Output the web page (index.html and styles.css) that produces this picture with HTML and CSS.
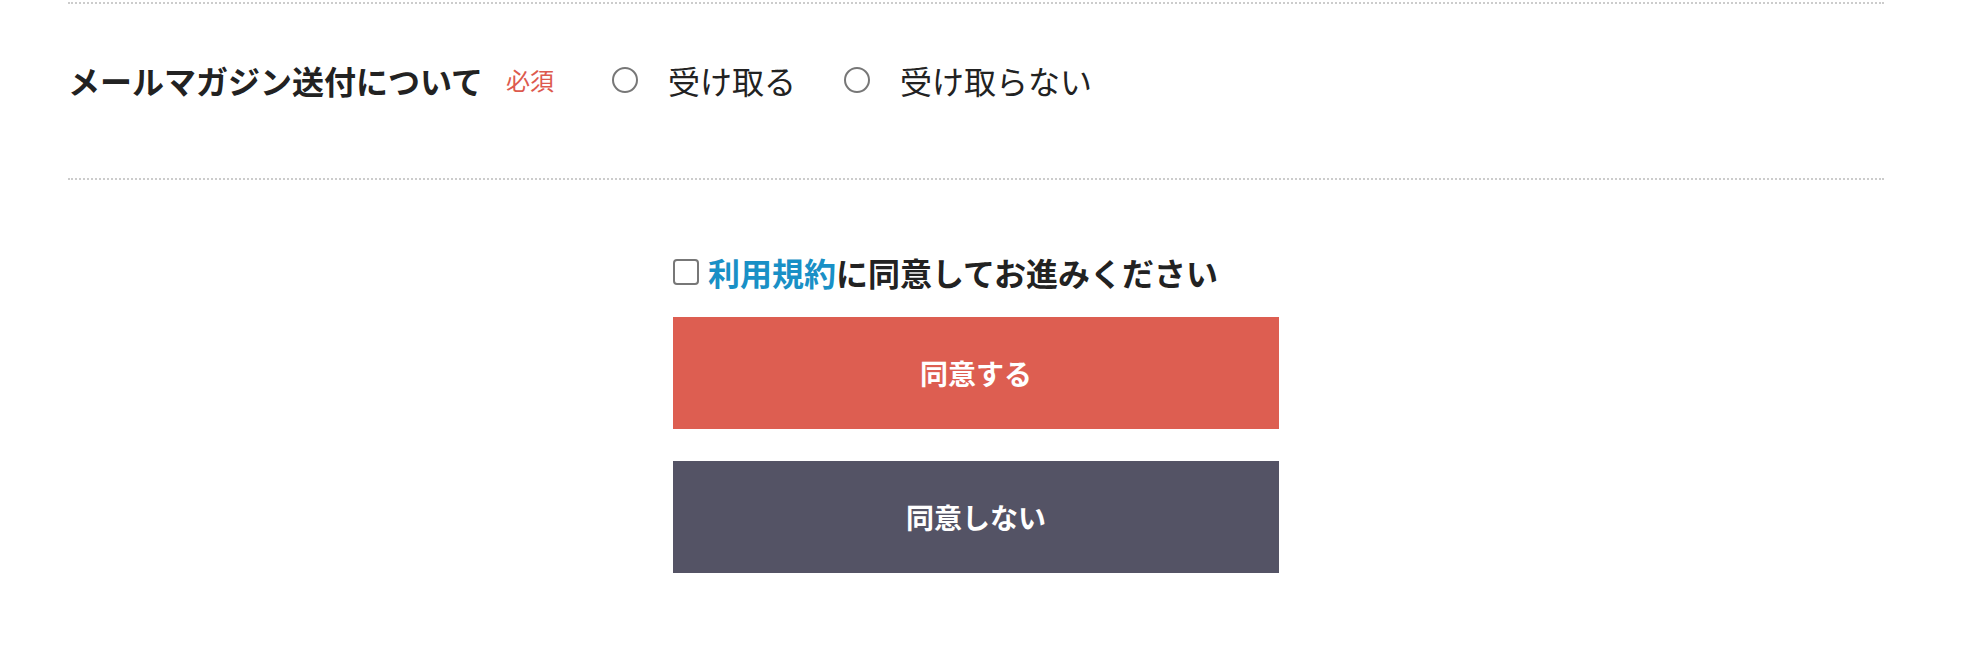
FILE: index.html
```html
<!DOCTYPE html>
<html lang="ja">
<head>
<meta charset="utf-8">
<title>メールマガジン送付について</title>
<link rel="stylesheet" href="styles.css">
</head>
<body>
<div class="page">
  <div class="form-row">
    <div class="row-label">
      <span class="label-text">メールマガジン送付について</span>
      <span class="required">必須</span>
    </div>
    <div class="radios">
      <label class="radio-item"><span class="radio"></span><span class="radio-text">受け取る</span></label>
      <label class="radio-item"><span class="radio"></span><span class="radio-text">受け取らない</span></label>
    </div>
  </div>
  <div class="agree">
    <div class="agree-inner">
      <label class="agree-check"><span class="checkbox"></span><span class="agree-text"><a class="terms" href="#">利用規約</a>に同意してお進みください</span></label>
      <button class="btn btn-agree" type="button">同意する</button>
      <button class="btn btn-disagree" type="button">同意しない</button>
    </div>
  </div>
</div>
</body>
</html>
```

FILE: styles.css
```css
html, body {
  margin: 0;
  padding: 0;
  background: #fff;
}
body {
  font-family: "Noto Sans CJK JP", "Noto Sans", sans-serif;
  color: #222;
}
.page {
  padding: 2px 102px 0 68px;
}
.form-row {
  border-top: 2px dotted #ccc;
  border-bottom: 2px dotted #ccc;
  height: 174px;
  box-sizing: content-box;
  display: flex;
  align-items: flex-start;
}
.row-label {
  display: flex;
  align-items: center;
  margin-top: 52px;
  height: 48px;
}
.label-text {
  font-size: 32px;
  font-weight: 700;
  line-height: 48px;
}
.required {
  font-size: 24px;
  color: #dd5a4e;
  margin-left: 23px;
  line-height: 48px;
}
.radios {
  display: flex;
  align-items: center;
  margin-top: 52px;
  height: 48px;
  margin-left: 58px;
  gap: 48px;
}
.radio-item {
  display: flex;
  align-items: center;
  gap: 30px;
}
.radio {
  width: 22px;
  height: 22px;
  border: 2px solid #777;
  border-radius: 50%;
  background: #fff;
}
.radio-text {
  font-size: 32px;
  line-height: 48px;
}
.agree {
  display: flex;
  justify-content: center;
  padding-top: 68px;
}
.agree-inner {
  width: 606px;
  display: flex;
  flex-direction: column;
}
.agree-check {
  display: flex;
  align-items: center;
  gap: 9px;
  height: 48px;
  font-size: 32px;
  font-weight: 700;
  line-height: 48px;
}
.checkbox {
  width: 22px;
  height: 22px;
  border: 2px solid #777;
  border-radius: 4px;
  background: #fff;
}
.terms {
  color: #1990c6;
  text-decoration: none;
}
.btn {
  border: 0;
  width: 606px;
  height: 112px;
  font-family: "Noto Sans CJK JP", "Noto Sans", sans-serif;
  font-size: 28px;
  font-weight: 700;
  color: #fff;
  display: flex;
  align-items: center;
  justify-content: center;
  padding: 0;
}
.btn-agree {
  background: #dd5e51;
  margin-top: 21px;
}
.btn-disagree {
  background: #545365;
  margin-top: 32px;
}
```
